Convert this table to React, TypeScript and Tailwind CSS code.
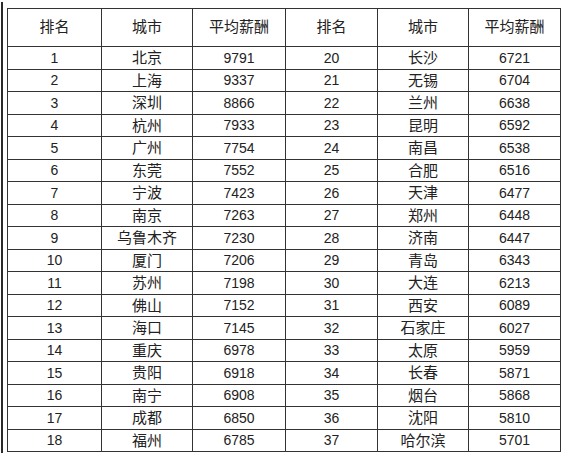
import React from 'react';

const rows: [number, string, number, number, string, number][] = [
  [1, '北京', 9791, 20, '长沙', 6721],
  [2, '上海', 9337, 21, '无锡', 6704],
  [3, '深圳', 8866, 22, '兰州', 6638],
  [4, '杭州', 7933, 23, '昆明', 6592],
  [5, '广州', 7754, 24, '南昌', 6538],
  [6, '东莞', 7552, 25, '合肥', 6516],
  [7, '宁波', 7423, 26, '天津', 6477],
  [8, '南京', 7263, 27, '郑州', 6448],
  [9, '乌鲁木齐', 7230, 28, '济南', 6447],
  [10, '厦门', 7206, 29, '青岛', 6343],
  [11, '苏州', 7198, 30, '大连', 6213],
  [12, '佛山', 7152, 31, '西安', 6089],
  [13, '海口', 7145, 32, '石家庄', 6027],
  [14, '重庆', 6978, 33, '太原', 5959],
  [15, '贵阳', 6918, 34, '长春', 5871],
  [16, '南宁', 6908, 35, '烟台', 5868],
  [17, '成都', 6850, 36, '沈阳', 5810],
  [18, '福州', 6785, 37, '哈尔滨', 5701],
];

const headers = ['排名', '城市', '平均薪酬', '排名', '城市', '平均薪酬'];
const widths = ['w-[94px]', 'w-[91px]', 'w-[93px]', 'w-[92px]', 'w-[91px]', 'w-[92px]'];

const font = 'font-["Liberation_Sans","Noto_Sans_CJK_SC",sans-serif]';

export default function App() {
  return (
    <div className={`w-[566px] h-[453px] bg-white overflow-hidden flex ${font}`}>
      {/* dark edge strip on the left */}
      <div className="ml-[1px] mt-[2px] w-[2px] bg-[#2a2a2a]" />
      <div className="ml-[4px] mt-[8px]">
        <table className="border-collapse text-[#222] table-fixed">
          <colgroup>
            {widths.map((w, i) => (
              <col key={i} className={w} />
            ))}
          </colgroup>
          <thead>
            <tr className="h-[38px]">
              {headers.map((h, i) => (
                <th key={i} className="border border-[#333] font-normal text-[15px] text-center p-0">
                  {h}
                </th>
              ))}
            </tr>
          </thead>
          <tbody>
            {rows.map((r, i) => (
              <tr key={i} className="h-[22.5px]">
                {r.map((c, j) => (
                  <td
                    key={j}
                    className={`border border-[#333] text-center p-0 leading-none ${
                      typeof c === 'number' ? 'text-[14px]' : 'text-[15px]'
                    }`}
                  >
                    {c}
                  </td>
                ))}
              </tr>
            ))}
          </tbody>
        </table>
      </div>
    </div>
  );
}
